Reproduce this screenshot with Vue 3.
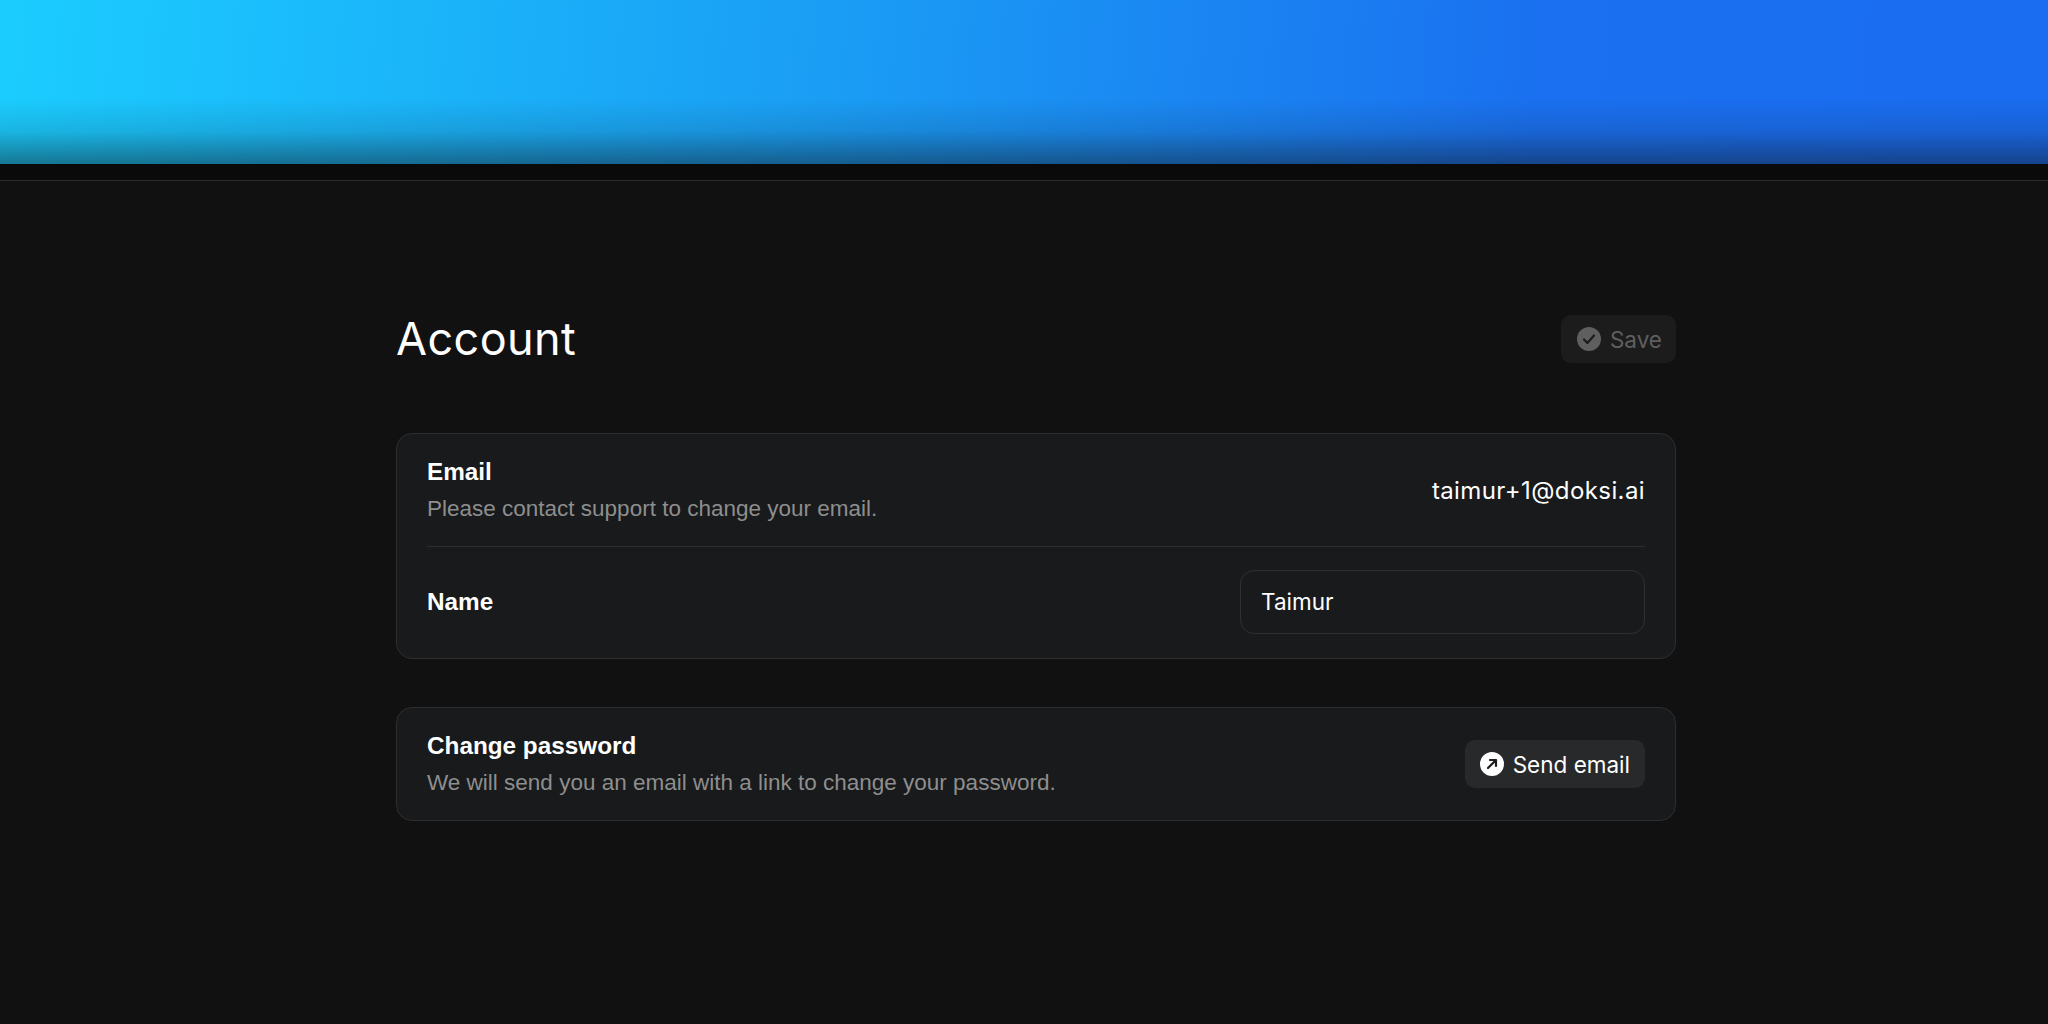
<script setup>
import { ref } from 'vue'

const name = ref('Taimur')
</script>

<template>
  <div class="page">
    <div class="banner"></div>
    <div class="strip"></div>

    <main class="content">
      <header class="head">
        <h1>Account</h1>
        <button class="btn btn-off" disabled>
          <svg class="ico" viewBox="0 0 24 24">
            <circle cx="12" cy="12" r="12" fill="currentColor" />
            <path d="M7 12.5l3.4 3.4L17 8.5" fill="none" stroke="#1c1c1d" stroke-width="2.2" stroke-linecap="round" stroke-linejoin="round" />
          </svg>
          Save
        </button>
      </header>

      <section class="card">
        <div class="row row-email">
          <div>
            <div class="label">Email</div>
            <div class="hint">Please contact support to change your email.</div>
          </div>
          <div class="value">taimur+1@doksi.ai</div>
        </div>
        <div class="row row-name">
          <div class="label">Name</div>
          <input v-model="name" class="field" />
        </div>
      </section>

      <section class="card">
        <div class="row row-pass">
          <div>
            <div class="label">Change password</div>
            <div class="hint">We will send you an email with a link to change your password.</div>
          </div>
          <button class="btn">
            <svg class="ico" viewBox="0 0 24 24">
              <circle cx="12" cy="12" r="12" fill="#fff" />
              <path d="M8 16l8-8M10 8h6v6" fill="none" stroke="#1c1e20" stroke-width="2.2" stroke-linecap="round" stroke-linejoin="round" />
            </svg>
            Send email
          </button>
        </div>
      </section>
    </main>
  </div>
</template>

<style>
body { background: #111; }
</style>

<style scoped>
.page {
  min-height: 1024px;
  padding-left: 24px;
  box-sizing: border-box;
  background: #111;
  font-family: Inter, "Liberation Sans", sans-serif;
  color: #fff;
}
.banner {
  height: 164px;
  margin-left: -24px;
  background:
    linear-gradient(180deg, rgba(15,16,17,0) 60%, rgba(15,16,17,0.12) 80%, rgba(15,16,17,0.45) 100%),
    linear-gradient(95deg, #1bcdff 0%, #1a9ef5 40%, #1a70f0 75%, #1a6cf0 100%);
}
.strip {
  height: 16px;
  margin-left: -24px;
  background: #0a0a0a;
  border-bottom: 1px solid #2a2a2a;
}
.content {
  width: 1280px;
  margin: 0 auto;
  padding-top: 134px;
}
.head {
  display: flex;
  align-items: center;
  justify-content: space-between;
  margin-bottom: 70px;
}
h1 {
  margin: 0;
  font-size: 45px;
  font-weight: 400;
  line-height: 48px;
  letter-spacing: 0.4px;
}
.card {
  background: #181a1c;
  border: 1px solid #2c2e30;
  border-radius: 16px;
  padding: 0 30px;
  margin-bottom: 48px;
}
.row {
  display: flex;
  align-items: center;
  justify-content: space-between;
}
.row-email {
  height: 112px;
  border-bottom: 1px solid #2c2e30;
}
.row-name {
  height: 111px;
  box-sizing: border-box;
  padding-bottom: 2px;
}
.row-pass { height: 112px; }
.label {
  font-family: "Liberation Sans", Arial, sans-serif;
  font-size: 24.3px;
  font-weight: 700;
  line-height: 32px;
}
.hint {
  margin-top: 5px;
  font-family: "Liberation Sans", Arial, sans-serif;
  font-size: 22.5px;
  line-height: 32px;
  color: #8e8e8e;
}
.value {
  font-size: 24px;
  letter-spacing: 0.4px;
}
.field {
  width: 405px;
  height: 64px;
  box-sizing: border-box;
  padding: 0 20px;
  background: transparent;
  border: 1px solid #2e3032;
  border-radius: 14px;
  color: #fff;
  font: inherit;
  font-size: 22.5px;
  outline: none;
}
.btn {
  display: inline-flex;
  align-items: center;
  gap: 9px;
  height: 48px;
  padding: 0 15px;
  background: #27292b;
  border: none;
  border-radius: 10px;
  color: #fff;
  font: inherit;
  font-size: 22.5px;
}
.btn-off {
  padding: 0 14px 0 16px;
  background: #1c1c1d;
  color: #5f5f60;
}
.ico {
  width: 24px;
  height: 24px;
}
</style>
